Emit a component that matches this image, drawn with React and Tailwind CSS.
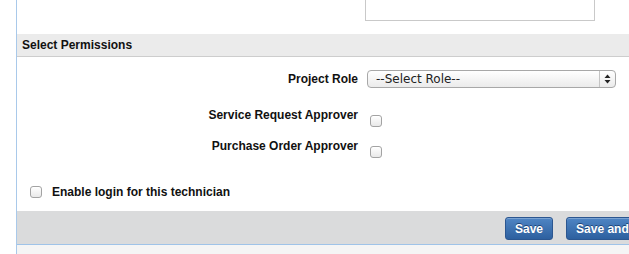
import React from 'react';

const Check = ({ className = '' }) => (
    <span className={`block w-[12px] h-[12px] rounded-[3px] border border-[#a3a3a3] bg-gradient-to-b from-white to-[#e9e9e9] shadow-[inset_0_1px_0_#fff] ${className}`} />
);

const Button = ({ children }) => (
    <button className="h-[23px] px-[9px] rounded-[3px] border border-[#2b5690] bg-gradient-to-b from-[#4f85c4] to-[#2d609f] text-white text-[12px] font-bold leading-none whitespace-nowrap [text-shadow:0_-1px_0_#1f4577] shadow-[inset_0_1px_0_rgba(255,255,255,0.25)]">
        {children}
    </button>
);

const App = () => {
    return (
        <div className="w-[629px] h-[254px] overflow-hidden bg-white font-['Liberation_Sans',Arial,sans-serif] text-[#111]">
            <div className="ml-4 h-full border-l border-[#a9c9ea] flex flex-col">
                {/* Top textarea remnant */}
                <div className="h-[34px]">
                    <div className="ml-[348px] w-[230px] h-[21px] border-x border-b border-[#c9c9c9] bg-white" />
                </div>

                {/* Section header */}
                <div className="h-[23px] flex items-center pl-[5px] bg-[#ebebeb] border-b border-[#cdcdcd] text-[12px] font-bold">
                    Select Permissions
                </div>

                {/* Permissions */}
                <div className="pt-[13px]">
                    <div className="flex items-center h-[18px]">
                        <div className="w-[341px] text-right text-[12px] font-bold">Project Role</div>
                        <div className="ml-[9px] w-[249px] h-[18px] flex items-center rounded-[4px] border border-[#a8a8a8] bg-gradient-to-b from-white to-[#ebebeb] font-['DejaVu_Sans',sans-serif] text-[12px] text-[#222]">
                            <span className="flex-1 pl-[8px] leading-none">--Select Role--</span>
                            <span className="w-[16px] h-full border-l border-[#c4c4c4] flex items-center justify-center">
                                <svg width="7" height="10" viewBox="0 0 7 10">
                                    <path d="M3.5 0.5 L6.5 4 H0.5 Z" fill="#222" />
                                    <path d="M3.5 9.5 L6.5 6 H0.5 Z" fill="#222" />
                                </svg>
                            </span>
                        </div>
                    </div>

                    <div className="flex items-start mt-[20px]">
                        <div className="w-[341px] text-right text-[12px] leading-[14px] font-bold">Service Request Approver</div>
                        <Check className="ml-[12px] mt-[7px]" />
                    </div>

                    <div className="flex items-start mt-[12px]">
                        <div className="w-[341px] text-right text-[12px] leading-[14px] font-bold">Purchase Order Approver</div>
                        <Check className="ml-[12px] mt-[7px]" />
                    </div>

                    <div className="flex items-center mt-[27px] pl-[13px]">
                        <Check />
                        <span className="ml-[10px] text-[12px] leading-[14px] font-bold">Enable login for this technician</span>
                    </div>
                </div>

                {/* Footer */}
                <div className="mt-[12px] h-[34px] flex items-start pt-[6px] pl-[488px] gap-[13px] bg-[#dadbdc] border-b border-[#9fc3e8]">
                    <Button>Save</Button>
                    <Button>Save and Add New</Button>
                </div>
                <div className="flex-1 bg-[#f5f5f5]" />
            </div>
        </div>
    );
};

export default App;
